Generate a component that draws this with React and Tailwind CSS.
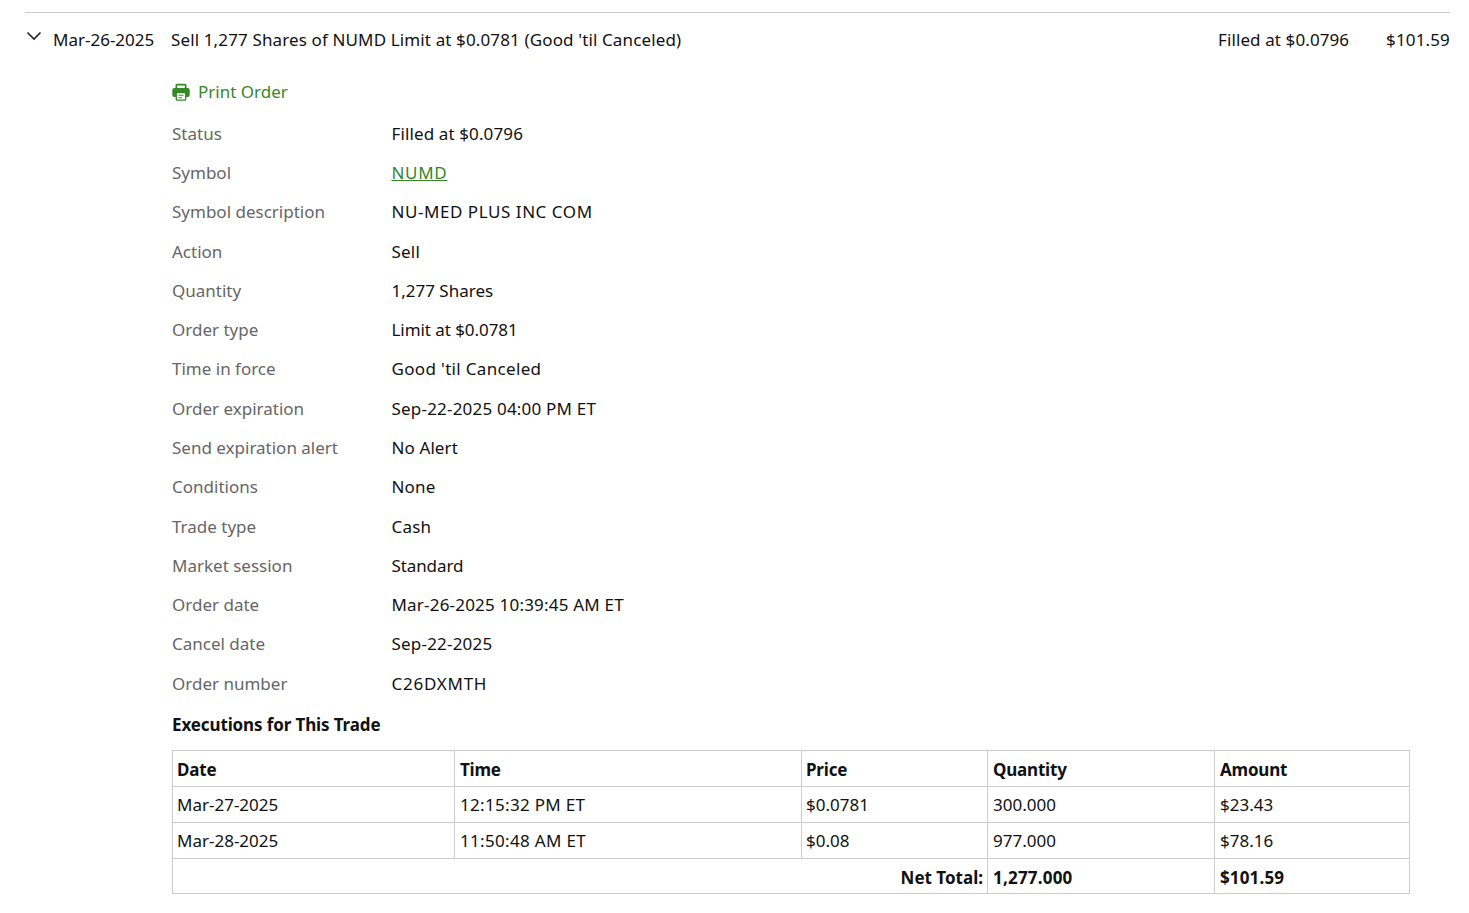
const rows = [
  ["Status", "Filled at $0.0796", "tracking-[0.12px]"],
  ["Symbol", "NUMD", "tracking-[0.7px]"],
  ["Symbol description", "NU-MED PLUS INC COM", "tracking-[0.55px]"],
  ["Action", "Sell", "tracking-[0.2px]"],
  ["Quantity", "1,277 Shares", ""],
  ["Order type", "Limit at $0.0781", "tracking-[-0.06px]"],
  ["Time in force", "Good 'til Canceled", "tracking-[0.33px]"],
  ["Order expiration", "Sep-22-2025 04:00 PM ET", "tracking-[0.2px]"],
  ["Send expiration alert", "No Alert", "tracking-[0.1px]"],
  ["Conditions", "None", "tracking-[0.2px]"],
  ["Trade type", "Cash", "tracking-[0.2px]"],
  ["Market session", "Standard", "tracking-[-0.1px]"],
  ["Order date", "Mar-26-2025 10:39:45 AM ET", "tracking-[0.2px]"],
  ["Cancel date", "Sep-22-2025", "tracking-[0.2px]"],
  ["Order number", "C26DXMTH", "tracking-[0.75px]"],
];
const execs = [
  ["Mar-27-2025", "12:15:32 PM ET", "$0.0781", "300.000", "$23.43"],
  ["Mar-28-2025", "11:50:48 AM ET", "$0.08", "977.000", "$78.16"],
];
const base = "border border-[#cccccc] pr-1 h-9 align-middle";
const pads = ["pl-[4px]", "pl-[5px]", "pl-[4px]", "pl-[5px]", "pl-[5px]"];
export default function App() {
  return (
    <div className="min-h-[913px] bg-white pl-[25px] pr-[19px] pt-3 font-['Noto_Sans',sans-serif] text-[17px] leading-[24px] text-[#111111]">
      <div className="border-t border-[#cccccc] pt-[15px] flex items-start">
        <svg className="w-[16px] h-[10px] mt-[3px] ml-[1px] shrink-0" viewBox="0 0 16 10" fill="none" stroke="#222" strokeWidth="1.6"><path d="M1.5 1.5 L8 8 L14.5 1.5" /></svg>
        <span className="ml-[11px] w-[118px] shrink-0">Mar-26-2025</span>
        <span className="flex-1 tracking-[0.13px]">Sell 1,277 Shares of NUMD Limit at $0.0781 (Good 'til Canceled)</span>
        <span className="w-[168px] shrink-0 tracking-[0.1px]">Filled at $0.0796</span>
        <span className="tracking-[0.15px]">$101.59</span>
      </div>
      <div className="pl-[147px] pr-[40px]">
        <div className="flex items-center mt-[28px] text-[#368727]">
          <svg className="w-[18px] h-[18px] mr-[8px]" viewBox="0 0 18 18">
            <path fill="#368727" fillRule="evenodd" d="M5 .8h8a1.500 1.500 0 0 1 1.500 1.500V6h-11V2.300A1.500 1.500 0 0 1 5 .8zM5.200 2.500V5.500h7.600V2.500z" />
            <path fill="#368727" d="M2.300 5h13.400a2 2 0 0 1 2 2v5a2 2 0 0 1-2 2H14v-3.500H4V14H2.300a2 2 0 0 1-2-2V7a2 2 0 0 1 2-2z" />
            <rect x="4.300" y="9.700" width="9.400" height="7.500" rx="1" fill="#fff" stroke="#368727" strokeWidth="1.300" />
            <path d="M6.500 12.300h5M6.500 14.700h3.500" stroke="#368727" strokeWidth="1.100" fill="none" />
          </svg>
          Print Order
        </div>
        <div className="mt-[17.85px] grid grid-cols-[219.500px_1fr] auto-rows-[39.27px]">
          {rows.map(([k, v, t]) => (
            <div key={k} className="contents">
              <div className="text-[#666666]">{k}</div>
              <div className={t}>{v === "NUMD" ? <span className="text-[#368727] underline">{v}</span> : v}</div>
            </div>
          ))}
        </div>
        <div className="font-bold mt-[1.85px] tracking-[-0.12px]">Executions for This Trade</div>
        <table className="mt-[13px] w-[1237px] border-collapse table-fixed">
          <colgroup>
            <col className="w-[282px]" /><col className="w-[347px]" /><col className="w-[186px]" /><col className="w-[227px]" /><col className="w-[195px]" />
          </colgroup>
          <tbody>
            <tr className="font-bold tracking-[-0.2px]">
              {["Date", "Time", "Price", "Quantity", "Amount"].map((h, i) => <td key={h} className={`${base} pt-[4px] ${pads[i]}`}>{h}</td>)}
            </tr>
            {execs.map((r) => (
              <tr key={r[0]}>{r.map((c, i) => <td key={c} className={`${base} pt-[2px] ${pads[i]} ${i === 1 ? "tracking-[0.32px]" : ""}`}>{c}</td>)}</tr>
            ))}
            <tr className="font-bold">
              <td colSpan={3} className={`${base} pt-[4px] pl-[4px] text-right !h-[35px]`}>Net Total:</td>
              <td className={`${base} pt-[4px] pl-[5px] !h-[35px] tracking-[0.2px]`}>1,277.000</td>
              <td className={`${base} pt-[4px] pl-[5px] !h-[35px] tracking-[0.15px]`}>$101.59</td>
            </tr>
          </tbody>
        </table>
      </div>
    </div>
  );
}
